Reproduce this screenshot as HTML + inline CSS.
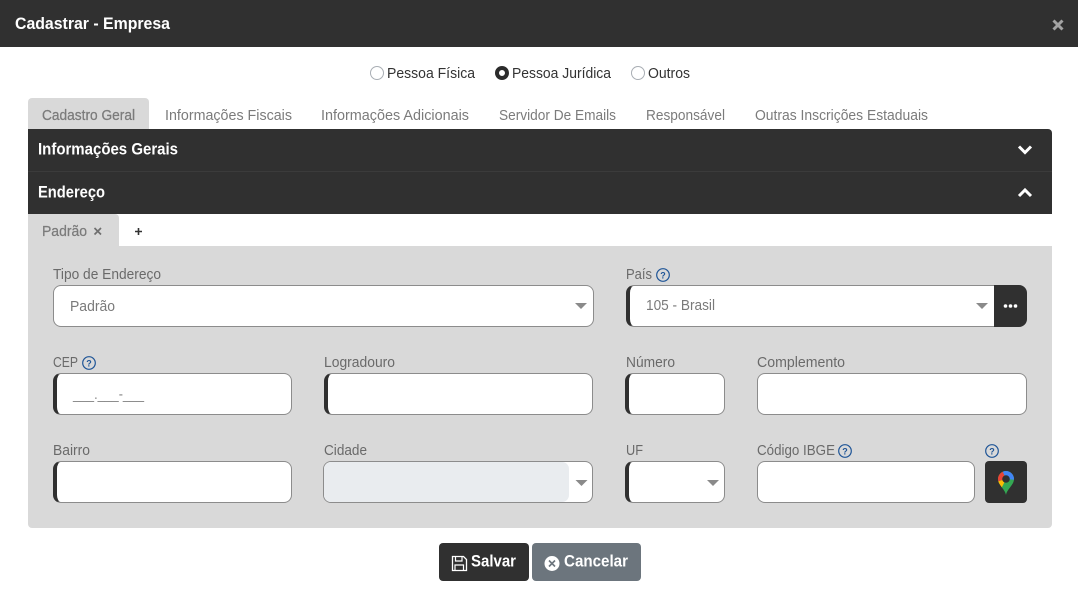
<!DOCTYPE html>
<html lang="pt-BR">
<head>
<meta charset="utf-8">
<title>Cadastrar - Empresa</title>
<style>
html,body{margin:0;padding:0;background:#fff;width:1078px;height:592px;overflow:hidden}
.b{position:absolute;box-sizing:border-box}
.i{background:#fff;border:1px solid #8c8c8c;border-radius:8px}
.l{border-left:4px solid #303030}
svg{position:absolute;left:0;top:0}
text{font-family:"Liberation Sans",Arial,sans-serif;font-size:14.5px}
.lb{fill:#6a6a6a}
.tab{fill:#7b7b7b}
.wh{fill:#fff;font-weight:bold;font-size:16.5px}
.rd{fill:#333}
.md{stroke:#7b7b7b;stroke-width:.25px}
</style>
</head>
<body>
<div class="b" style="left:0;top:0;width:1078px;height:47px;background:#303030"></div>
<div class="b" style="left:28px;top:98px;width:121px;height:32px;background:#d9d9d9;border-radius:4px 4px 0 0"></div>
<div class="b" style="left:28px;top:129px;width:1024px;height:85px;background:#303030;border-radius:0 4px 0 0"></div>
<div class="b" style="left:28px;top:171px;width:1024px;height:1px;background:#3b3b3b"></div>
<div class="b" style="left:28px;top:214px;width:91px;height:32px;background:#d9d9d9;border-radius:0 4px 0 0"></div>
<div class="b" style="left:28px;top:246px;width:1024px;height:282px;background:#d9d9d9;border-radius:0 0 4px 4px"></div>

<div class="b i" style="left:53px;top:285px;width:541px;height:42px"></div>
<div class="b i l" style="left:626px;top:285px;width:369px;height:42px;border-radius:8px 0 0 8px"></div>
<div class="b" style="left:994px;top:285px;width:33px;height:42px;background:#303030;border-radius:0 8px 8px 0"></div>

<div class="b i l" style="left:53px;top:373px;width:239px;height:42px"></div>
<div class="b i l" style="left:324px;top:373px;width:269px;height:42px"></div>
<div class="b i l" style="left:625px;top:373px;width:100px;height:42px"></div>
<div class="b i" style="left:757px;top:373px;width:270px;height:42px"></div>

<div class="b i l" style="left:53px;top:461px;width:239px;height:42px"></div>
<div class="b i" style="left:323px;top:461px;width:270px;height:42px"></div>
<div class="b" style="left:324px;top:462px;width:245px;height:40px;background:#e9ecef;border-radius:7px"></div>
<div class="b i l" style="left:625px;top:461px;width:100px;height:42px"></div>
<div class="b i" style="left:757px;top:461px;width:218px;height:42px"></div>
<div class="b" style="left:985px;top:461px;width:42px;height:42px;background:#303030;border-radius:4px"></div>

<div class="b" style="left:439px;top:543px;width:90px;height:38px;background:#303030;border-radius:4px"></div>
<div class="b" style="left:532px;top:543px;width:109px;height:38px;background:#6c757d;border-radius:4px"></div>

<svg width="1078" height="592" viewBox="0 0 1078 592" xmlns="http://www.w3.org/2000/svg">
  <defs>
    <clipPath id="pin"><path d="M1006 495C1005 489 998 485 998 479a8 8 0 0 1 16 0C1014 485 1007 489 1006 495z"/></clipPath>
  </defs>
  <text x="15" y="29" class="wh" textLength="155" lengthAdjust="spacingAndGlyphs">Cadastrar - Empresa</text>
  <path d="M1053.500 20.500l9 9M1062.500 20.500l-9 9" stroke="#a3a3a3" stroke-width="3" fill="none"/>

  <circle cx="377" cy="73" r="6.500" fill="#fff" stroke="#a9aeb4"/>
  <text x="387" y="78" class="rd" textLength="88" lengthAdjust="spacingAndGlyphs">Pessoa Física</text>
  <circle cx="502" cy="73" r="5" fill="#fff" stroke="#2b2b2b" stroke-width="4"/>
  <text x="512" y="78" class="rd" textLength="99" lengthAdjust="spacingAndGlyphs">Pessoa Jurídica</text>
  <circle cx="638" cy="73" r="6.500" fill="#fff" stroke="#a9aeb4"/>
  <text x="648" y="78" class="rd" textLength="42" lengthAdjust="spacingAndGlyphs">Outros</text>

  <text x="42" y="120" class="tab md" textLength="93" lengthAdjust="spacingAndGlyphs">Cadastro Geral</text>
  <text x="165" y="120" class="tab" textLength="127" lengthAdjust="spacingAndGlyphs">Informações Fiscais</text>
  <text x="321" y="120" class="tab" textLength="148" lengthAdjust="spacingAndGlyphs">Informações Adicionais</text>
  <text x="499" y="120" class="tab" textLength="117" lengthAdjust="spacingAndGlyphs">Servidor De Emails</text>
  <text x="646" y="120" class="tab" textLength="79" lengthAdjust="spacingAndGlyphs">Responsável</text>
  <text x="755" y="120" class="tab" textLength="173" lengthAdjust="spacingAndGlyphs">Outras Inscrições Estaduais</text>

  <text x="38" y="154.500" class="wh" textLength="140" lengthAdjust="spacingAndGlyphs">Informações Gerais</text>
  <text x="38" y="197.500" class="wh" textLength="67" lengthAdjust="spacingAndGlyphs">Endereço</text>
  <path d="M1019 146.500l6 6 6-6" stroke="#fff" stroke-width="3" fill="none"/>
  <path d="M1019 196l6-6 6 6" stroke="#fff" stroke-width="3" fill="none"/>

  <text x="42" y="236" class="tab md" textLength="45" lengthAdjust="spacingAndGlyphs">Padrão</text>
  <path d="M94.500 228l6.500 6.500M101 228l-6.500 6.500" stroke="#6f6f6f" stroke-width="1.700" fill="none"/>
  <path d="M135 231.500h7M138.500 228v7" stroke="#333" stroke-width="1.600" fill="none"/>

  <text x="53" y="279" class="lb" textLength="108" lengthAdjust="spacingAndGlyphs">Tipo de Endereço</text>
  <text x="70" y="311" fill="#7a7a7a" textLength="45" lengthAdjust="spacingAndGlyphs">Padrão</text>
  <path d="M575 303h12l-6 6z" fill="#8a8a8a"/>

  <text x="626" y="279" class="lb" textLength="26" lengthAdjust="spacingAndGlyphs">País</text>
  <text x="646" y="310" fill="#7a7a7a" textLength="69" lengthAdjust="spacingAndGlyphs">105 - Brasil</text>
  <path d="M976 303h12l-6 6z" fill="#8a8a8a"/>
  <circle cx="1005.500" cy="306" r="1.800" fill="#fff"/><circle cx="1010.500" cy="306" r="1.800" fill="#fff"/><circle cx="1015.500" cy="306" r="1.800" fill="#fff"/>

  <text x="53" y="367" class="lb" textLength="25" lengthAdjust="spacingAndGlyphs">CEP</text>
  <text x="324" y="367" class="lb" textLength="71" lengthAdjust="spacingAndGlyphs">Logradouro</text>
  <text x="626" y="367" class="lb" textLength="49" lengthAdjust="spacingAndGlyphs">Número</text>
  <text x="757" y="367" class="lb" textLength="88" lengthAdjust="spacingAndGlyphs">Complemento</text>
  <text x="73" y="399" fill="#888" textLength="71" lengthAdjust="spacingAndGlyphs">___.___-___</text>

  <text x="53" y="455" class="lb" textLength="37" lengthAdjust="spacingAndGlyphs">Bairro</text>
  <text x="324" y="455" class="lb" textLength="43" lengthAdjust="spacingAndGlyphs">Cidade</text>
  <path d="M575.500 480h12l-6 6z" fill="#8a8a8a"/>
  <text x="626" y="455" class="lb" textLength="17" lengthAdjust="spacingAndGlyphs">UF</text>
  <path d="M707 480h12l-6 6z" fill="#8a8a8a"/>
  <text x="757" y="455" class="lb" textLength="78" lengthAdjust="spacingAndGlyphs">Código IBGE</text>

  <g fill="none" stroke="#1f5597" stroke-width="1.200">
    <circle cx="663" cy="275" r="6.300"/>
    <circle cx="89" cy="363" r="6.300"/>
    <circle cx="845" cy="451" r="6.300"/>
    <circle cx="992" cy="451" r="6.300"/>
  </g>
  <g fill="#1f5597" text-anchor="middle">
    <text x="663" y="278.500" style="font-size:9px;font-weight:bold">?</text>
    <text x="89" y="366.500" style="font-size:9px;font-weight:bold">?</text>
    <text x="845" y="454.500" style="font-size:9px;font-weight:bold">?</text>
    <text x="992" y="454.500" style="font-size:9px;font-weight:bold">?</text>
  </g>

  <!-- map pin -->
  <g clip-path="url(#pin)">
    <rect x="996" y="468" width="20" height="28" fill="#34a853"/>
    <path d="M1001 468h15v12l-10-1z" fill="#4285f4"/>
    <path d="M996 468h5l5 11-10 3z" fill="#ea4335"/>
    <path d="M996 482l10-3-5 10h-5z" fill="#fbbc04"/>
  </g>
  <circle cx="1006" cy="479" r="3.800" fill="#303030"/>

  <!-- save -->
  <path d="M452.500 556.500h11l3 3v11h-14z" fill="none" stroke="#fff" stroke-width="1.300"/>
  <path d="M455.500 556.500v4.500h6.500v-4.500M455 570.500v-5.500h8.500v5.500" fill="none" stroke="#fff" stroke-width="1.200"/>
  <text x="471" y="566.500" class="wh" textLength="45" lengthAdjust="spacingAndGlyphs">Salvar</text>

  <!-- cancel -->
  <circle cx="552" cy="563.500" r="7.500" fill="#fff"/>
  <path d="M549 560.500l6 6M555 560.500l-6 6" stroke="#6c757d" stroke-width="1.600" fill="none"/>
  <text x="564" y="566.500" class="wh" textLength="64" lengthAdjust="spacingAndGlyphs">Cancelar</text>
</svg>
</body>
</html>
